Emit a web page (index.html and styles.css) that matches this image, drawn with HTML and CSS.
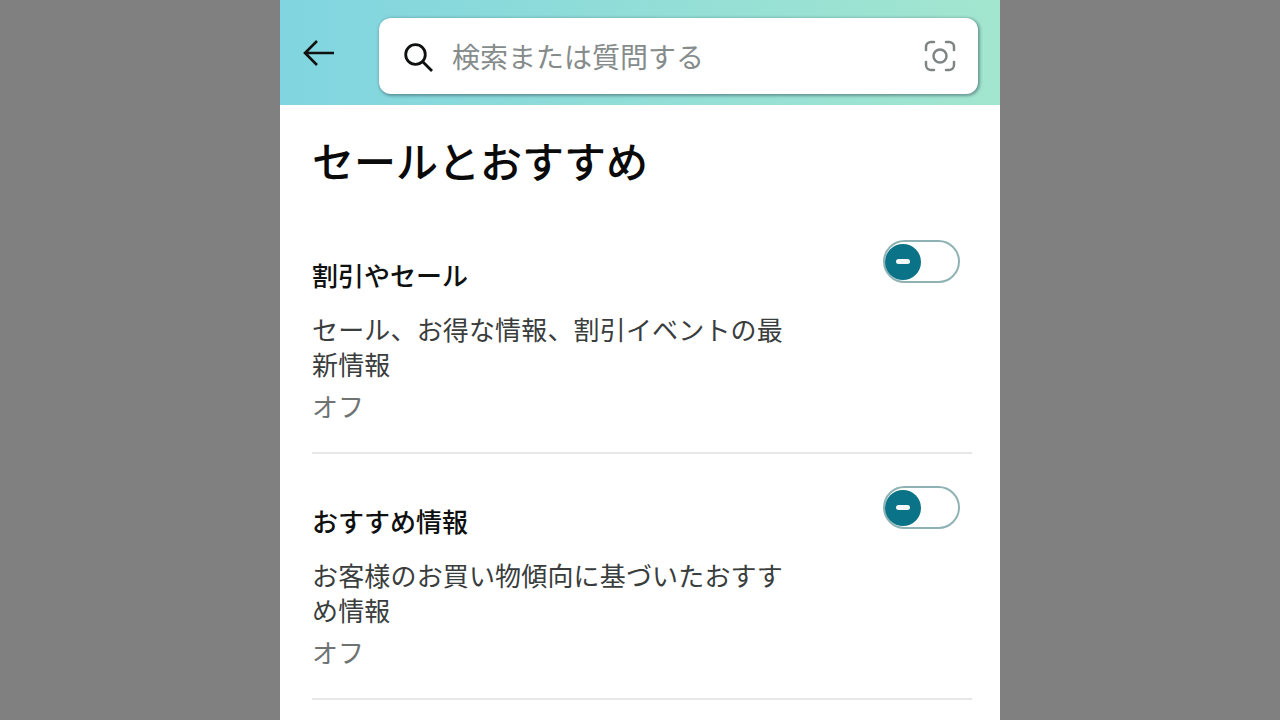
FILE: index.html
```html
<!DOCTYPE html>
<html lang="ja">
<head>
  <meta charset="utf-8"/>
  <title>セールとおすすめ</title>
  <link rel="stylesheet" href="styles.css">
</head>
<body>

<div class="phone">
  <header class="topbar">
    <svg class="back" width="36" height="30" viewBox="0 0 36 30">
      <path d="M33 15H4M16 3L4 15l12 12" fill="none" stroke="#0f1111" stroke-width="2.6"/>
    </svg>
    <div class="search">
      <svg class="lens" width="32" height="32" viewBox="0 0 32 32">
        <circle cx="13.500" cy="13.500" r="9.800" fill="none" stroke="#0f1111" stroke-width="2.800"/>
        <path d="M20.500 20.500L30 30" fill="none" stroke="#0f1111" stroke-width="2.800"/>
      </svg>
      <span class="placeholder">検索または質問する</span>
      <svg class="lens-cam" width="32" height="32" viewBox="0 0 32 32">
        <path d="M2 10V7a5 5 0 0 1 5-5h3M22 2h3a5 5 0 0 1 5 5v3M30 22v3a5 5 0 0 1-5 5h-3M10 30H7a5 5 0 0 1-5-5v-3" fill="none" stroke="#7f8585" stroke-width="2.500" stroke-linecap="round"/>
        <circle cx="16" cy="16" r="6.500" fill="none" stroke="#7f8585" stroke-width="2.500"/>
      </svg>
    </div>
  </header>

  <main class="content">
    <h1 class="page-title">セールとおすすめ</h1>

    <section class="pref">
      <div class="pref-text">
        <h2 class="pref-name">割引やセール</h2>
        <p class="pref-desc">セール、お得な情報、割引イベントの最新情報</p>
        <p class="pref-state">オフ</p>
      </div>
      <div class="toggle"><span class="knob"></span></div>
    </section>

    <section class="pref">
      <div class="pref-text">
        <h2 class="pref-name">おすすめ情報</h2>
        <p class="pref-desc">お客様のお買い物傾向に基づいたおすすめ情報</p>
        <p class="pref-state">オフ</p>
      </div>
      <div class="toggle"><span class="knob"></span></div>
    </section>
  </main>
</div>

</body>
</html>
```

FILE: styles.css
```css
html, body {
  margin: 0;
  height: 100%;
  overflow: hidden;
}
body {
  background-color: #808080;
  font-family: "Noto Sans CJK JP", "Noto Sans", sans-serif;
  color: #0f1111;
}
.phone {
  width: 720px;
  height: 720px;
  margin: 0 auto;
  background-color: #fff;
  overflow: hidden;
}
.topbar {
  height: 105px;
  box-sizing: border-box;
  padding: 18px 22px 0 21px;
  display: flex;
  align-items: flex-start;
  gap: 42px;
  background: linear-gradient(90deg, #80d5e0, #a3e6cf);
}
.back {
  flex: none;
  margin-top: 20px;
}
.search {
  flex: 1;
  height: 76px;
  box-sizing: border-box;
  padding: 0 22px 0 23px;
  display: flex;
  align-items: center;
  background-color: #fff;
  border-radius: 12px;
  box-shadow: 1px 1px 3px 1px rgba(50, 80, 90, .5);
}
.lens {
  flex: none;
  margin-top: 2px;
}
.placeholder {
  flex: 1;
  margin-left: 18px;
  font-size: 28px;
  line-height: 40px;
  color: #868b8b;
}
.lens-cam {
  flex: none;
}
.content {
  padding: 25px 28px 0 32px;
}
.page-title {
  margin: 0 0 50px;
  font-size: 42px;
  line-height: 60px;
  font-weight: 500;
  color: #0a0a0a;
}
.pref {
  height: 212px;
  margin-bottom: 32px;
  border-bottom: 2px solid #e6e8e8;
  display: flex;
  justify-content: space-between;
  align-items: flex-start;
}
.pref-text {
  width: 480px;
}
.pref-name {
  margin: 17px 0 18px;
  font-size: 26px;
  line-height: 36px;
  font-weight: 500;
}
.pref-desc {
  margin: 0 0 7px;
  font-size: 26px;
  line-height: 35px;
  letter-spacing: .16px;
  color: #3a3d3d;
}
.pref-state {
  margin: 0;
  font-size: 26px;
  line-height: 36px;
  color: #6f7373;
}
.toggle {
  width: 77px;
  height: 43px;
  box-sizing: border-box;
  margin-right: 12px;
  display: flex;
  align-items: center;
  border: 2px solid #8fb3b5;
  border-radius: 22px;
}
.knob {
  display: flex;
  align-items: center;
  justify-content: center;
  width: 36px;
  height: 36px;
  border-radius: 50%;
  background-color: #0a7388;
}
.knob::before {
  content: "";
  width: 14px;
  height: 5px;
  border-radius: 2.5px;
  background-color: #f4f8f8;
}
```
